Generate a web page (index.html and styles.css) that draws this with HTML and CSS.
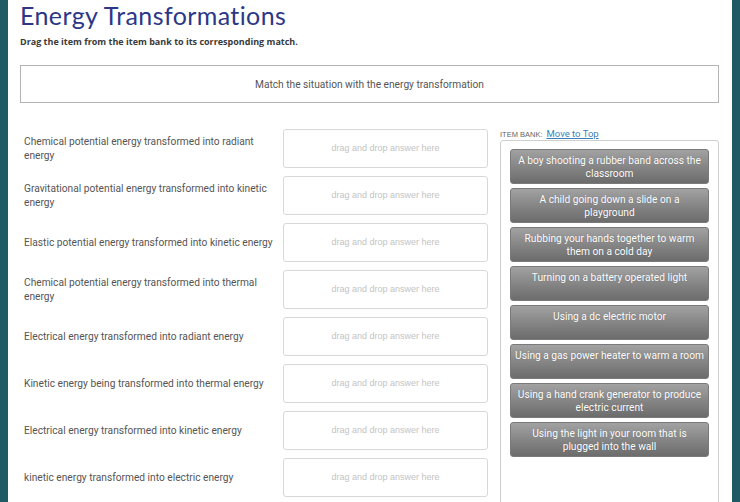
FILE: index.html
```html
<!DOCTYPE html>
<html>
<head>
<meta charset="utf-8">
<link rel="stylesheet" href="styles.css">
</head>
<body>
<div class="frame">
  <div class="edge"></div>
  <main class="content">
    <h1 class="title">Energy Transformations</h1>
    <p class="subtitle">Drag the item from the item bank to its corresponding match.</p>
    <div class="prompt">Match the situation with the energy transformation</div>
    <div class="board">
      <div class="matches">
        <div class="row"><div class="label">Chemical potential energy transformed into radiant energy</div><div class="drop">drag and drop answer here</div></div>
        <div class="row"><div class="label">Gravitational potential energy transformed into kinetic energy</div><div class="drop">drag and drop answer here</div></div>
        <div class="row"><div class="label">Elastic potential energy transformed into kinetic energy</div><div class="drop">drag and drop answer here</div></div>
        <div class="row"><div class="label">Chemical potential energy transformed into thermal energy</div><div class="drop">drag and drop answer here</div></div>
        <div class="row"><div class="label">Electrical energy transformed into radiant energy</div><div class="drop">drag and drop answer here</div></div>
        <div class="row"><div class="label">Kinetic energy being transformed into thermal energy</div><div class="drop">drag and drop answer here</div></div>
        <div class="row"><div class="label">Electrical energy transformed into kinetic energy</div><div class="drop">drag and drop answer here</div></div>
        <div class="row"><div class="label">kinetic energy transformed into electric energy</div><div class="drop">drag and drop answer here</div></div>
      </div>
      <div class="bank">
        <div class="bank-head"><span class="bank-title">ITEM BANK:</span> <a class="bank-link" href="#">Move to Top</a></div>
        <div class="bank-box">
          <div class="item">A boy shooting a rubber band across the classroom</div>
          <div class="item">A child going down a slide on a playground</div>
          <div class="item">Rubbing your hands together to warm them on a cold day</div>
          <div class="item">Turning on a battery operated light</div>
          <div class="item">Using a dc electric motor</div>
          <div class="item">Using a gas power heater to warm a room</div>
          <div class="item">Using a hand crank generator to produce electric current</div>
          <div class="item">Using the light in your room that is plugged into the wall</div>
        </div>
      </div>
    </div>
  </main>
  <div class="edge"></div>
</div>
</body>
</html>
```

FILE: styles.css
```css
html, body {
  margin: 0;
  padding: 0;
  background: #ffffff;
  height: 100%;
  overflow: hidden;
}

.frame {
  display: flex;
  width: 740px;
  height: 502px;
  overflow: hidden;
}

.edge {
  width: 8px;
  flex: none;
  background: #1f5b64;
}

.content {
  flex: 1;
  padding: 0 13px 0 12px;
  font-family: Roboto, "Liberation Sans", sans-serif;
  color: #555;
}

.title {
  margin: 0;
  padding-top: 2px;
  font-family: Lato, "Open Sans", sans-serif;
  font-weight: 400;
  font-size: 25px;
  letter-spacing: 0.4px;
  line-height: 27px;
  color: #2c3787;
}

.subtitle {
  margin: 6px 0 0;
  font-family: "Open Sans", sans-serif;
  font-weight: 700;
  font-size: 9px;
  line-height: 14px;
  color: #3a3a3a;
}

.prompt {
  margin-top: 16px;
  height: 36px;
  border: 1px solid #b4b4b4;
  display: flex;
  align-items: center;
  justify-content: center;
  font-size: 10.2px;
  color: #555;
}

.board {
  display: flex;
  gap: 12px;
  margin-top: 23px;
}

.matches {
  width: 468px;
  padding-top: 3px;
  display: flex;
  flex-direction: column;
  gap: 8px;
}

.row {
  display: flex;
  align-items: center;
  height: 39px;
}

.label {
  flex: 1;
  padding: 0 6px 0 4px;
  font-size: 10.2px;
  line-height: 14px;
  color: #555;
}

.drop {
  width: 205px;
  height: 39px;
  flex: none;
  box-sizing: border-box;
  border: 1px solid #d8d8d8;
  border-radius: 3px;
  display: flex;
  align-items: center;
  justify-content: center;
  font-family: "Liberation Sans", Arial, sans-serif;
  font-size: 9px;
  color: #c4c4c4;
  padding-bottom: 2px;
}

.bank {
  flex: 1;
}

.bank-head {
  height: 12px;
  line-height: 12px;
  margin-bottom: 2px;
  white-space: nowrap;
}

.bank-title {
  font-family: "Liberation Sans", Arial, sans-serif;
  font-size: 7.5px;
  color: #666;
}

.bank-link {
  font-size: 9.5px;
  color: #3d7fb5;
  text-decoration: underline;
}

.bank-box {
  border: 1px solid #cfcfcf;
  border-radius: 3px;
  padding: 8px 9px;
  height: 400px;
  display: flex;
  flex-direction: column;
  gap: 4px;
}

.item {
  height: 35px;
  box-sizing: border-box;
  padding: 4px 3px 0;
  border: 1px solid #7a7a7a;
  border-radius: 3px;
  background: linear-gradient(#a2a2a2, #838383 55%, #6c6c6c);
  color: #ffffff;
  text-align: center;
  font-size: 10.2px;
  line-height: 13px;
  text-shadow: 0 0 1px rgba(0, 0, 0, 0.25);
}
```
